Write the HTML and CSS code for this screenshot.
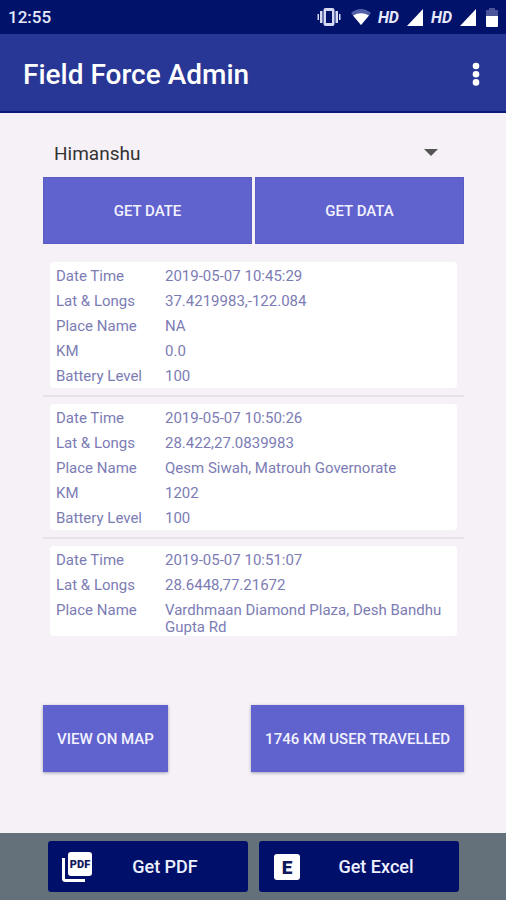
FILE: index.html
```html
<!DOCTYPE html>
<html lang="en">
<head>
<meta charset="utf-8">
<meta name="viewport" content="width=device-width, initial-scale=1">
<title>Field Force Admin</title>
<link rel="stylesheet" href="styles.css">
</head>
<body>
<div class="status">
  <span class="clock">12:55</span>
  <div class="indicators">
    <svg width="24" height="18" viewBox="0 0 24 18" fill="#d5d9f2"><path fill-rule="evenodd" d="M8.500 0h7a2 2 0 0 1 2 2v14a2 2 0 0 1-2 2h-7a2 2 0 0 1-2-2V2a2 2 0 0 1 2-2zm.5 3v12h6V3z"/><path d="M3 3h2.500v12H3zM18.500 3H21v12h-2.500zM.5 6H2v6H.5zM22 6h1.500v6H22z"/></svg>
    <svg class="wifi" width="20" height="16" viewBox="0 0 20 16"><path d="M0 4Q10-4 20 4L10 16z" fill="#5360a8"/><path d="M2 6.500Q10 2 18 6.500L10 16z" fill="#fff"/></svg>
    <span class="hd">HD</span>
    <svg width="16" height="17" viewBox="0 0 16 17"><path d="M16 0v17H0z" fill="#fff"/></svg>
    <span class="hd">HD</span>
    <svg class="signal" width="16" height="17" viewBox="0 0 16 17"><path d="M16 0v17H0z" fill="#fff"/></svg>
    <svg width="12" height="19" viewBox="0 0 12 19"><path d="M3 0h6v2h2q1 0 1 1v5H0V3q0-1 1-1h2z" fill="#4a559c"/><path d="M0 8h12v10q0 1-1 1H1q-1 0-1-1z" fill="#fff"/></svg>
  </div>
</div>
<header class="appbar">
  <h1>Field Force Admin</h1>
  <button class="more" type="button" aria-label="More options"><svg width="8" height="24" viewBox="0 0 8 24" fill="#fff"><circle cx="4" cy="4" r="3.3"/><circle cx="4" cy="12.2" r="3.3"/><circle cx="4" cy="20.4" r="3.3"/></svg></button>
</header>
<main>
  <div class="picker">
    <select aria-label="User"><option>Himanshu</option></select>
    <svg class="caret" width="14" height="7" viewBox="0 0 14 7"><path d="M0 0h14L7 7z" fill="#555"/></svg>
  </div>
  <div class="queries">
    <button class="btn" type="button">GET DATE</button>
    <button class="btn" type="button">GET DATA</button>
  </div>
  <ul class="records">
    <li>
      <dl class="card">
        <dt>Date Time</dt><dd>2019-05-07 10:45:29</dd>
        <dt>Lat &amp; Longs</dt><dd>37.4219983,-122.084</dd>
        <dt>Place Name</dt><dd>NA</dd>
        <dt>KM</dt><dd>0.0</dd>
        <dt>Battery Level</dt><dd>100</dd>
      </dl>
    </li>
    <li>
      <dl class="card">
        <dt>Date Time</dt><dd>2019-05-07 10:50:26</dd>
        <dt>Lat &amp; Longs</dt><dd>28.422,27.0839983</dd>
        <dt>Place Name</dt><dd>Qesm Siwah, Matrouh Governorate</dd>
        <dt>KM</dt><dd>1202</dd>
        <dt>Battery Level</dt><dd>100</dd>
      </dl>
    </li>
    <li>
      <dl class="card card-last">
        <dt>Date Time</dt><dd>2019-05-07 10:51:07</dd>
        <dt>Lat &amp; Longs</dt><dd>28.6448,77.21672</dd>
        <dt>Place Name</dt><dd>Vardhmaan Diamond Plaza, Desh Bandhu Gupta Rd</dd>
      </dl>
    </li>
  </ul>
  <div class="actions">
    <button class="btn raised" type="button">VIEW ON MAP</button>
    <button class="btn raised" type="button">1746 KM USER TRAVELLED</button>
  </div>
</main>
<footer>
  <button class="export" type="button">
    <svg width="30" height="30" viewBox="0 0 30 30"><path d="M1.500 6v20.500q0 2 2 2H23" fill="none" stroke="#fff" stroke-width="3"/><rect x="6" width="24" height="24" rx="3" fill="#fff"/><text x="18" y="16" text-anchor="middle" class="mark mark-pdf">PDF</text></svg>
    <span>Get PDF</span>
  </button>
  <button class="export" type="button">
    <svg width="30" height="30" viewBox="0 0 30 30"><rect x="1" y="2" width="26" height="26" rx="3" fill="#fff"/><text x="14" y="22" text-anchor="middle" class="mark mark-excel">E</text></svg>
    <span>Get Excel</span>
  </button>
</footer>
</body>
</html>
```
FILE: styles.css
```css
* { box-sizing: border-box; }

body {
  margin: 0;
  min-height: 100vh;
  display: flex;
  flex-direction: column;
  background: #f6f1f6;
  font-family: Roboto, "Liberation Sans", sans-serif;
}

button, select {
  font-family: inherit;
  border: 0;
  border-radius: 0;
  margin: 0;
}

svg { display: block; flex: none; }

.status {
  height: 34px;
  padding: 0 8px;
  display: flex;
  align-items: center;
  justify-content: space-between;
  background: #00126a;
  color: #e6e9fa;
}

.clock { font-size: 17px; font-weight: 500; }

.indicators { display: flex; align-items: center; gap: 8px; }

.wifi { margin-left: 2px; margin-right: -1px; }
.signal { margin-right: 2px; }

.hd { font-size: 16px; font-weight: 700; font-style: italic; }

.appbar {
  height: 79px;
  padding: 3px 26px 0 23px;
  display: flex;
  align-items: center;
  justify-content: space-between;
  background: #283795;
  border-bottom: 2px solid #0d1b78;
  color: #fff;
}

h1 { margin: 0; font-size: 28px; font-weight: 500; }

.more { padding: 0; background: none; }

main { flex: 1; padding: 17px 42px 0 43px; }

.picker { position: relative; height: 47px; }

.picker select {
  appearance: none;
  width: 100%;
  height: 100%;
  padding: 0 11px;
  background: none;
  color: #333;
  font-size: 19px;
}

.caret {
  position: absolute;
  right: 26px;
  top: 19px;
  pointer-events: none;
}

.queries { display: grid; grid-template-columns: 1fr 1fr; gap: 3px; }

.btn {
  height: 67px;
  padding: 0 14px;
  background: #6062ce;
  box-shadow: inset 0 0 0 1px #5a5cc2;
  color: #f2f2ff;
  font-size: 15px;
  font-weight: 500;
}

.raised { box-shadow: 0 1px 3px #a0a0b4; }

.records { list-style: none; margin: 18px 0 69px; padding: 0; }

.records li + li {
  margin-top: 7px;
  padding-top: 7px;
  border-top: 2px solid #e6e0e7;
}

.card {
  margin: 0 7px;
  padding: 6px 6px 3px;
  display: grid;
  grid-template-columns: 102px 1fr;
  column-gap: 7px;
  row-gap: 8px;
  background: #fff;
  border-radius: 4px;
  color: #7c7cb4;
  font-size: 15px;
  line-height: 17px;
}

.card-last { padding-bottom: 0; }

dd { margin: 0; }

.actions { display: flex; justify-content: space-between; }

footer {
  padding: 8px 47px 8px 48px;
  display: grid;
  grid-template-columns: 1fr 1fr;
  gap: 11px;
  background: #64717a;
}

.export {
  height: 51px;
  padding: 0 10px 0 14px;
  display: flex;
  align-items: center;
  background: #00106a;
  border-radius: 3px;
  color: #eef0ff;
  font-size: 18px;
  font-weight: 500;
}

.export span { flex: 1; text-align: center; }

.mark { font-weight: 900; fill: #101860; }
.mark-pdf { font-size: 11px; }
.mark-excel { font-size: 19px; }
```
